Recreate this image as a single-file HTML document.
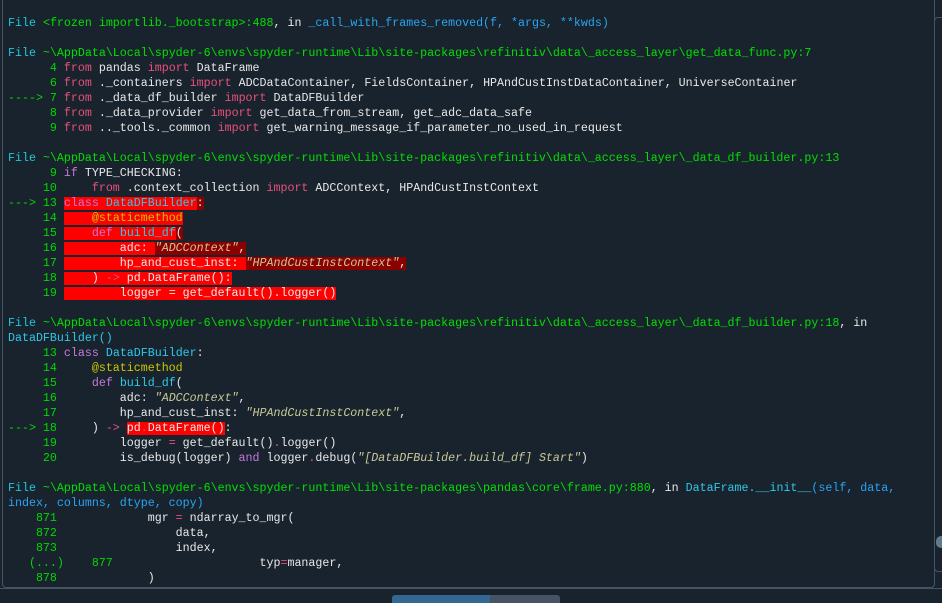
<!DOCTYPE html>
<html><head><meta charset="utf-8"><style>
html,body{margin:0;padding:0;background:#19232d;width:942px;height:603px;overflow:hidden;position:relative}
pre{position:absolute;left:8px;top:16px;margin:0;font-family:"Liberation Mono",monospace;font-size:11.65px;line-height:15px;color:#e8e8e8;white-space:pre}
.c{color:#1ec8d8}.g{color:#00e000}.n{color:#00d800}.k{color:#e8507a}.p{color:#c678dd}.b{color:#30c8e8}.l{color:#2aa4f0}
.s{color:#c8c896;font-style:italic}.d{color:#c8c800}.o{color:#e8507a}
.r{background:#ff0000}.dr{background:#8b0000}
.frame{position:absolute;left:2px;top:-5px;width:931px;height:592px;border:1px solid #455364;border-top:none;border-radius:0 0 4px 4px}
.sb{position:absolute;left:934px;top:17px;width:10px;height:553px;border:1px solid #455364;border-radius:4px}
.th{position:absolute;left:936px;top:536px;width:10px;height:12px;border-radius:5px;background:#60798b}
.hl{position:absolute;left:0;top:588px;width:942px;height:1px;background:#455364}
.t1{position:absolute;left:392px;top:595px;width:98px;height:10px;background:#346792;border-radius:3px 0 0 0}
.t2{position:absolute;left:490px;top:595px;width:70px;height:10px;background:#455364;border-radius:0 3px 0 0}
</style></head><body>
<div class="frame"></div><div class="sb"></div><div class="th"></div><div class="hl"></div><div class="t1"></div><div class="t2"></div>
<pre><span class="c">File</span> <span class="g">&lt;frozen importlib._bootstrap&gt;:488</span>, in <span class="l">_call_with_frames_removed(f, *args, **kwds)</span>

<span class="c">File</span> <span class="g">~\AppData\Local\spyder-6\envs\spyder-runtime\Lib\site-packages\refinitiv\data\_access_layer\get_data_func.py:7</span>
<span class="n">      4</span> <span class="k">from</span> pandas <span class="k">import</span> DataFrame
<span class="n">      6</span> <span class="k">from</span> ._containers <span class="k">import</span> ADCDataContainer, FieldsContainer, HPAndCustInstDataContainer, UniverseContainer
<span class="n">----&gt; 7</span> <span class="k">from</span> ._data_df_builder <span class="k">import</span> DataDFBuilder
<span class="n">      8</span> <span class="k">from</span> ._data_provider <span class="k">import</span> get_data_from_stream, get_adc_data_safe
<span class="n">      9</span> <span class="k">from</span> .._tools._common <span class="k">import</span> get_warning_message_if_parameter_no_used_in_request

<span class="c">File</span> <span class="g">~\AppData\Local\spyder-6\envs\spyder-runtime\Lib\site-packages\refinitiv\data\_access_layer\_data_df_builder.py:13</span>
<span class="n">      9</span> <span class="p">if</span> TYPE_CHECKING:
<span class="n">     10</span>     <span class="k">from</span> .context_collection <span class="k">import</span> ADCContext, HPAndCustInstContext
<span class="n">---&gt; 13</span> <span class="r"><span class="p">class</span> <span class="b">DataDFBuilder</span></span><span class="dr">:</span>
<span class="n">     14</span> <span class="r">    <span class="d">@staticmethod</span></span>
<span class="n">     15</span> <span class="r">    <span class="p">def</span> <span class="b">build_df</span></span><span class="dr">(</span>
<span class="n">     16</span> <span class="r">        adc: </span><span class="dr"><span class="s">"ADCContext"</span>,</span>
<span class="n">     17</span> <span class="r">        hp_and_cust_inst: </span><span class="dr"><span class="s">"HPAndCustInstContext"</span>,</span>
<span class="n">     18</span> <span class="r">    ) <span class="o">-&gt;</span> pd.DataFrame():</span>
<span class="n">     19</span> <span class="r">        logger = get_default().logger()</span>

<span class="c">File</span> <span class="g">~\AppData\Local\spyder-6\envs\spyder-runtime\Lib\site-packages\refinitiv\data\_access_layer\_data_df_builder.py:18</span>, in
<span class="b">DataDFBuilder()</span>
<span class="n">     13</span> <span class="p">class</span> <span class="b">DataDFBuilder</span>:
<span class="n">     14</span>     <span class="d">@staticmethod</span>
<span class="n">     15</span>     <span class="p">def</span> <span class="b">build_df</span>(
<span class="n">     16</span>         adc: <span class="s">"ADCContext"</span>,
<span class="n">     17</span>         hp_and_cust_inst: <span class="s">"HPAndCustInstContext"</span>,
<span class="n">---&gt; 18</span>     ) <span class="o">-&gt;</span> <span class="r">pd<span class="o">.</span>DataFrame()</span>:
<span class="n">     19</span>         logger <span class="o">=</span> get_default()<span class="o">.</span>logger()
<span class="n">     20</span>         is_debug(logger) <span class="p">and</span> logger<span class="o">.</span>debug(<span class="s">"[DataDFBuilder.build_df] Start"</span>)

<span class="c">File</span> <span class="g">~\AppData\Local\spyder-6\envs\spyder-runtime\Lib\site-packages\pandas\core\frame.py:880</span>, in <span class="b">DataFrame.__init__</span><span class="l">(self, data,</span>
<span class="l">index, columns, dtype, copy)</span>
<span class="n">    871</span>             mgr <span class="o">=</span> ndarray_to_mgr(
<span class="n">    872</span>                 data,
<span class="n">    873</span>                 index,
<span class="n">   (...)    877</span>                     typ<span class="o">=</span>manager,
<span class="n">    878</span>             )</pre>
</body></html>
